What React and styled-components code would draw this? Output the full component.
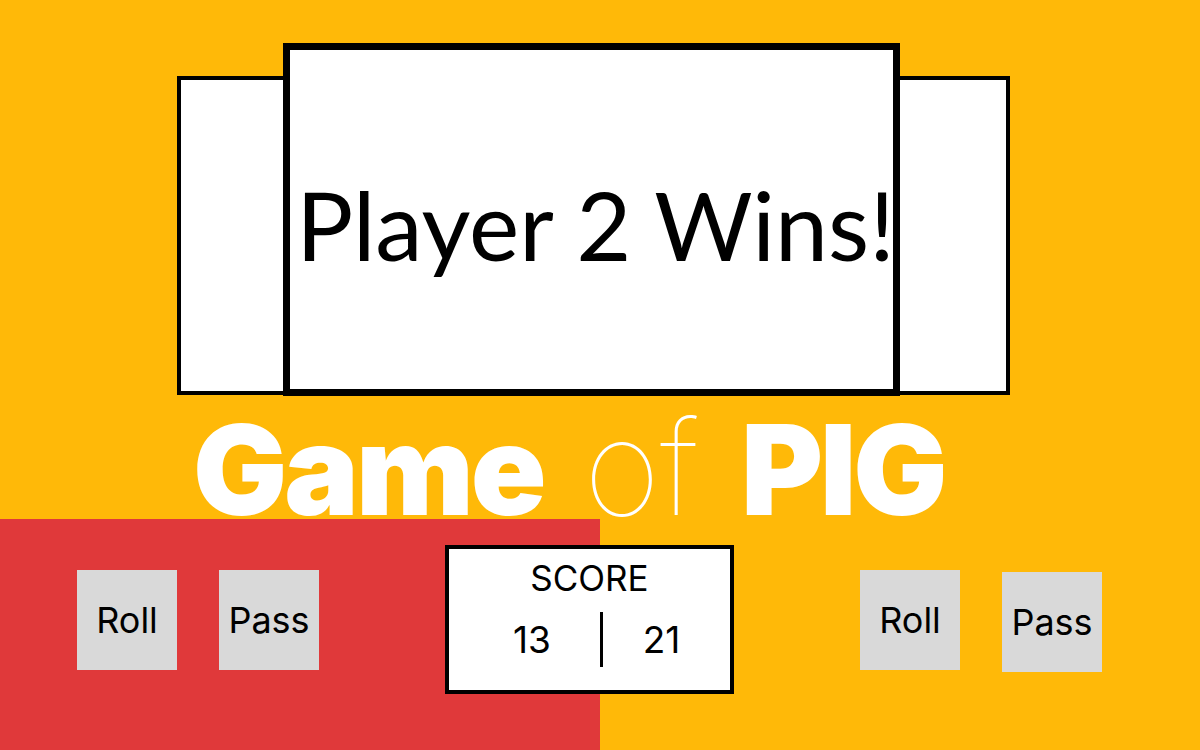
import React from 'react';
import styled, { createGlobalStyle } from 'styled-components';

const GlobalStyle = createGlobalStyle`
    html, body {
        margin: 0;
        padding: 0;
        background-color: #ffb908;
    }
    * {
        box-sizing: border-box;
    }
`;

const App = () => {
    const scores = [13, 21];

    return (
        <Page>
            <GlobalStyle />
            <Stage>
                <SideCard side='left' />
                <MainCard>
                    <WinnerText>Player 2 Wins!</WinnerText>
                </MainCard>
                <SideCard side='right' />
            </Stage>
            <Title>
                <Heavy>Game</Heavy>
                <Thin>of</Thin>
                <Heavy>PIG</Heavy>
            </Title>
            <Bottom>
                <ButtonGroup left={77}>
                    <GameButton>Roll</GameButton>
                    <GameButton>Pass</GameButton>
                </ButtonGroup>
                <ScoreBox>
                    <ScoreLabel>SCORE</ScoreLabel>
                    <ScoreRow>
                        <ScoreValue side='left'>{scores[0]}</ScoreValue>
                        <Divider />
                        <ScoreValue side='right'>{scores[1]}</ScoreValue>
                    </ScoreRow>
                </ScoreBox>
                <ButtonGroup left={126}>
                    <GameButton>Roll</GameButton>
                    <GameButton offset={2}>Pass</GameButton>
                </ButtonGroup>
            </Bottom>
        </Page>
    );
};

const Page = styled.div`
    display: flex;
    flex-direction: column;
    width: 1200px;
    height: 750px;
    overflow: hidden;
    background-color: #ffb908;
    font-family: Inter, 'Liberation Sans', sans-serif;
`;

const Stage = styled.div`
    display: flex;
    align-items: flex-end;
    height: 396px;
    padding: 43px 0 0 177px;
`;

const SideCard = styled.div`
    width: ${({ side }) => (side === 'left' ? '106px' : '110px')};
    height: 319px;
    margin-bottom: 1px;
    background-color: #ffffff;
    border: 4px solid #000000;
    ${({ side }) => (side === 'left' ? 'border-right: none;' : 'border-left: none;')}
`;

const MainCard = styled.div`
    display: flex;
    align-items: center;
    justify-content: center;
    width: 617px;
    height: 353px;
    background-color: #ffffff;
    border: 7px solid #000000;
    padding-top: 8px;
`;

const WinnerText = styled.div`
    font-family: Lato, 'Open Sans', sans-serif;
    font-size: 95px;
    font-weight: 400;
    color: #000000;
    white-space: nowrap;
    margin-left: 8px;
`;

const Title = styled.div`
    display: flex;
    align-items: baseline;
    height: 123px;
    padding: 10px 0 0 193px;
    color: #ffffff;
    font-size: 125px;
    line-height: 123px;
    white-space: nowrap;
`;

const Heavy = styled.span`
    font-weight: 900;
    letter-spacing: -3px;
`;

const Thin = styled.span`
    font-weight: 100;
    font-size: 132px;
    margin: 0 42px 0 40px;
`;

const Bottom = styled.div`
    display: flex;
    align-items: flex-start;
    flex: 1;
    padding-top: 26px;
    background: linear-gradient(to right, #e0393a 600px, transparent 600px);
`;

const ButtonGroup = styled.div`
    display: flex;
    gap: 42px;
    margin: 25px 0 0 ${({ left }) => left}px;
`;

const GameButton = styled.div`
    display: flex;
    align-items: center;
    justify-content: center;
    width: 100px;
    height: 100px;
    margin-top: ${({ offset }) => offset || 0}px;
    background-color: #d9d9d9;
    color: #000000;
    font-size: 36px;
    user-select: none;
    cursor: pointer;
`;

const ScoreBox = styled.div`
    display: flex;
    flex-direction: column;
    align-items: stretch;
    width: 289px;
    height: 149px;
    margin-left: 126px;
    background-color: #ffffff;
    border: 4px solid #000000;
    padding-top: 8px;
`;

const ScoreLabel = styled.div`
    text-align: center;
    font-size: 35px;
    color: #000000;
`;

const ScoreRow = styled.div`
    display: flex;
    align-items: center;
    margin-top: 13px;
`;

const ScoreValue = styled.div`
    width: ${({ side }) => (side === 'left' ? '151px' : '127px')};
    ${({ side }) => (side === 'left' ? 'padding-left: 15px;' : 'padding-right: 10px;')}
    text-align: center;
    font-size: 37px;
    color: #000000;
`;

const Divider = styled.div`
    width: 3px;
    height: 55px;
    background-color: #000000;
`;

export default App;
